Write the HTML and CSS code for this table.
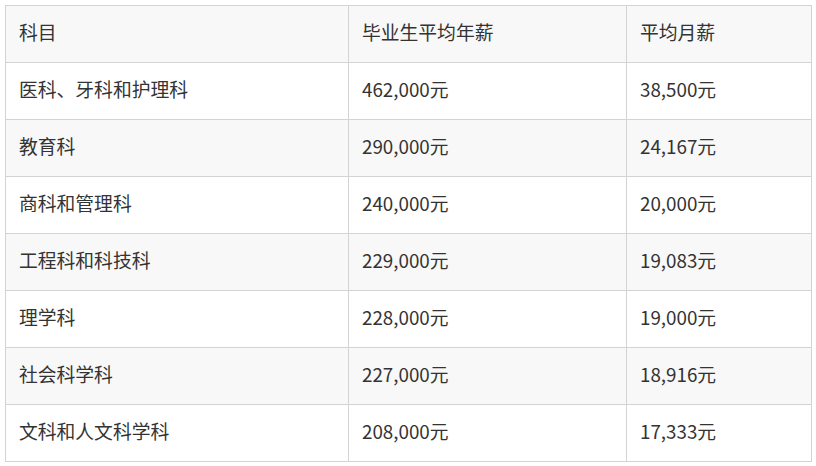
FILE: index.html
```html
<!DOCTYPE html>
<html lang="zh">
<head>
<meta charset="utf-8">
<link rel="stylesheet" href="styles.css">
</head>
<body>
<table class="salary">
  <colgroup>
    <col class="c1"><col class="c2"><col class="c3">
  </colgroup>
  <thead>
    <tr><th>科目</th><th>毕业生平均年薪</th><th>平均月薪</th></tr>
  </thead>
  <tbody>
    <tr><td>医科、牙科和护理科</td><td>462,000元</td><td>38,500元</td></tr>
    <tr><td>教育科</td><td>290,000元</td><td>24,167元</td></tr>
    <tr><td>商科和管理科</td><td>240,000元</td><td>20,000元</td></tr>
    <tr><td>工程科和科技科</td><td>229,000元</td><td>19,083元</td></tr>
    <tr><td>理学科</td><td>228,000元</td><td>19,000元</td></tr>
    <tr><td>社会科学科</td><td>227,000元</td><td>18,916元</td></tr>
    <tr><td>文科和人文科学科</td><td>208,000元</td><td>17,333元</td></tr>
  </tbody>
</table>
</body>
</html>
```
FILE: styles.css
```css
html, body {
  margin: 0;
  padding: 0;
  background: #ffffff;
}
body {
  padding: 5px 0 0 5px;
  font-family: "Noto Sans CJK SC", "Noto Sans", sans-serif;
  color: #333333;
}
.salary {
  border-collapse: collapse;
  table-layout: fixed;
  width: 806px;
}
.c1 { width: 343px; }
.c2 { width: 278px; }
.c3 { width: 185px; }
.salary th,
.salary td {
  height: 57px;
  padding: 0 0 4px 13px;
  border: 1px solid #d3d3d3;
  font-size: 18.8px;
  line-height: 1.3;
  font-weight: 400;
  text-align: left;
  vertical-align: middle;
  white-space: nowrap;
  box-sizing: border-box;
}
.salary thead tr,
.salary tbody tr:nth-child(even) {
  background: #f8f8f8;
}
```
